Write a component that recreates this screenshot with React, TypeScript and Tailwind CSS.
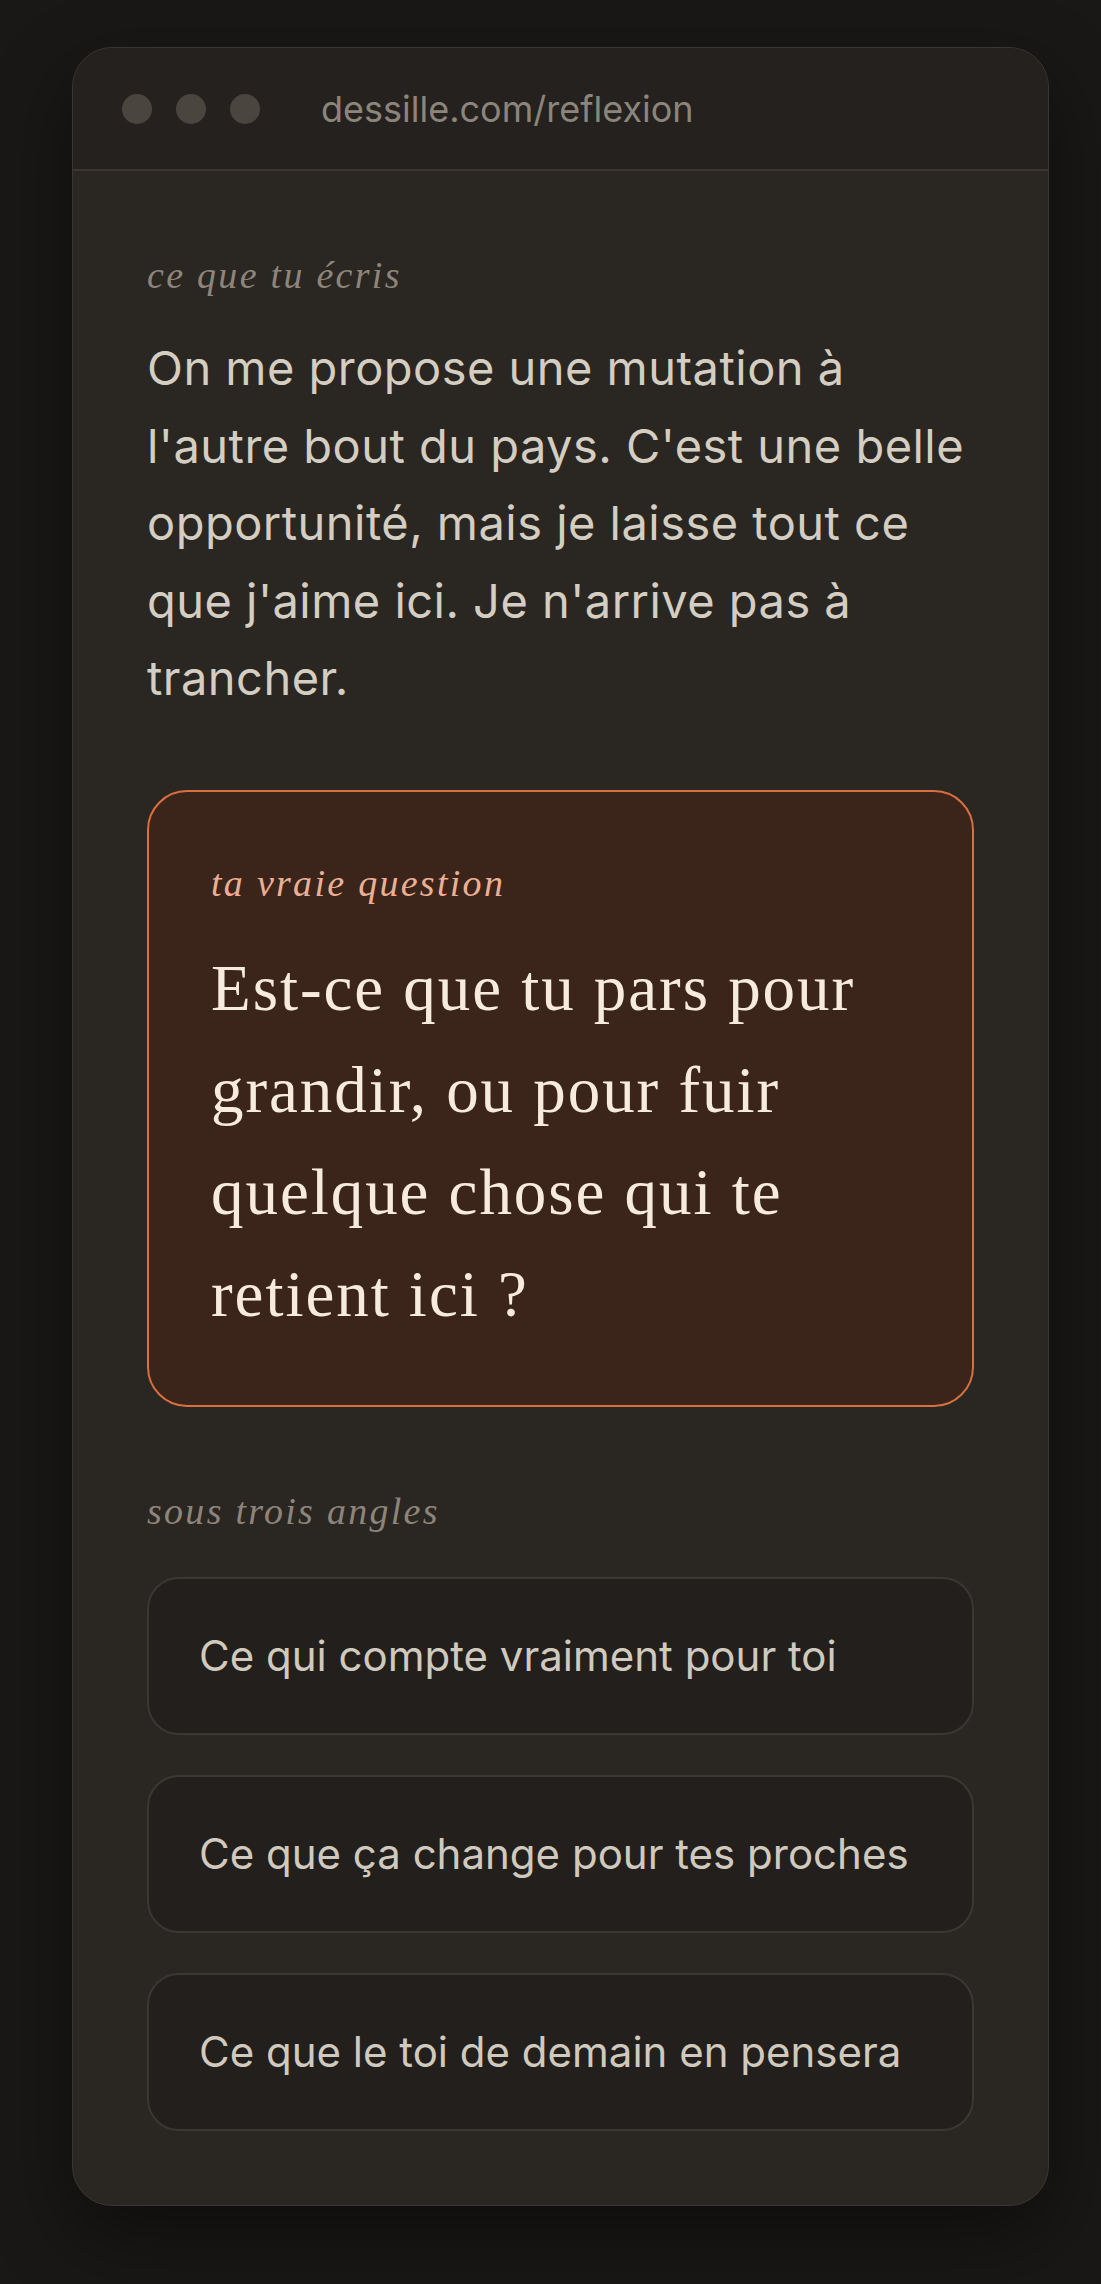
import React from 'react';

const angles = [
  'Ce qui compte vraiment pour toi',
  'Ce que ça change pour tes proches',
  'Ce que le toi de demain en pensera',
];

const Label: React.FC<{ children: React.ReactNode; className?: string }> = ({ children, className }) => (
  <p className={`font-['Liberation_Serif',serif] italic text-[38px] leading-[40px] tracking-[0.06em] ${className}`}>
    {children}
  </p>
);

const App: React.FC = () => {
  return (
    <div className="min-h-[2284px] bg-[#1a1816] pl-[72px] pt-[47px] pb-[78px]">
      <div className="w-[977px] overflow-hidden rounded-[40px] border border-[#3b3631] bg-[#2a2621] shadow-[0_30px_80px_rgba(0,0,0,0.45)]">
        {/* barre du navigateur */}
        <div className="flex h-[123px] items-center border-b-2 border-[#3b3631] bg-[#24211e] pl-[49px]">
          <div className="flex gap-[24px]">
            <span className="h-[30px] w-[30px] rounded-full bg-[#4a453f]" />
            <span className="h-[30px] w-[30px] rounded-full bg-[#4a453f]" />
            <span className="h-[30px] w-[30px] rounded-full bg-[#4a453f]" />
          </div>
          <span className="ml-[61px] font-['Inter',sans-serif] text-[36px] text-[#8c857c]">
            dessille.com/reflexion
          </span>
        </div>

        <div className="px-[74px] pt-[84px] pb-[74px]">
          <Label className="text-[#8d857b]">ce que tu écris</Label>
          <p className="mt-[34px] font-['Inter',sans-serif] text-[47px] leading-[77.5px] tracking-[0.01em] text-[#d4cdc2]">
            On me propose une mutation à<br />
            l'autre bout du pays. C'est une belle<br />
            opportunité, mais je laisse tout ce<br />
            que j'aime ici. Je n'arrive pas à<br />
            trancher.
          </p>

          <div className="mt-[73px] rounded-[40px] border-2 border-[#d9703f] bg-[#3b2419] px-[62px] pt-[71px] pb-[60px]">
            <Label className="text-[#eab095]">ta vraie question</Label>
            <h1 className="mt-[34px] font-['Liberation_Serif',serif] text-[65px] leading-[102px] tracking-[0.03em] text-[#f7ebdf]">
              Est-ce que tu pars pour grandir, ou pour fuir quelque chose qui te retient ici&nbsp;?
            </h1>
          </div>

          <Label className="mt-[84px] text-[#8d857b]">sous trois angles</Label>
          <div className="mt-[46px] flex flex-col gap-[40px]">
            {angles.map((a) => (
              <div
                key={a}
                className="flex h-[158px] items-center rounded-[32px] border-2 border-[#3b3732] bg-[#221f1c] px-[50px] font-['Inter',sans-serif] text-[42px] text-[#d0c9be]"
              >
                {a}
              </div>
            ))}
          </div>
        </div>
      </div>
    </div>
  );
};

export default App;
